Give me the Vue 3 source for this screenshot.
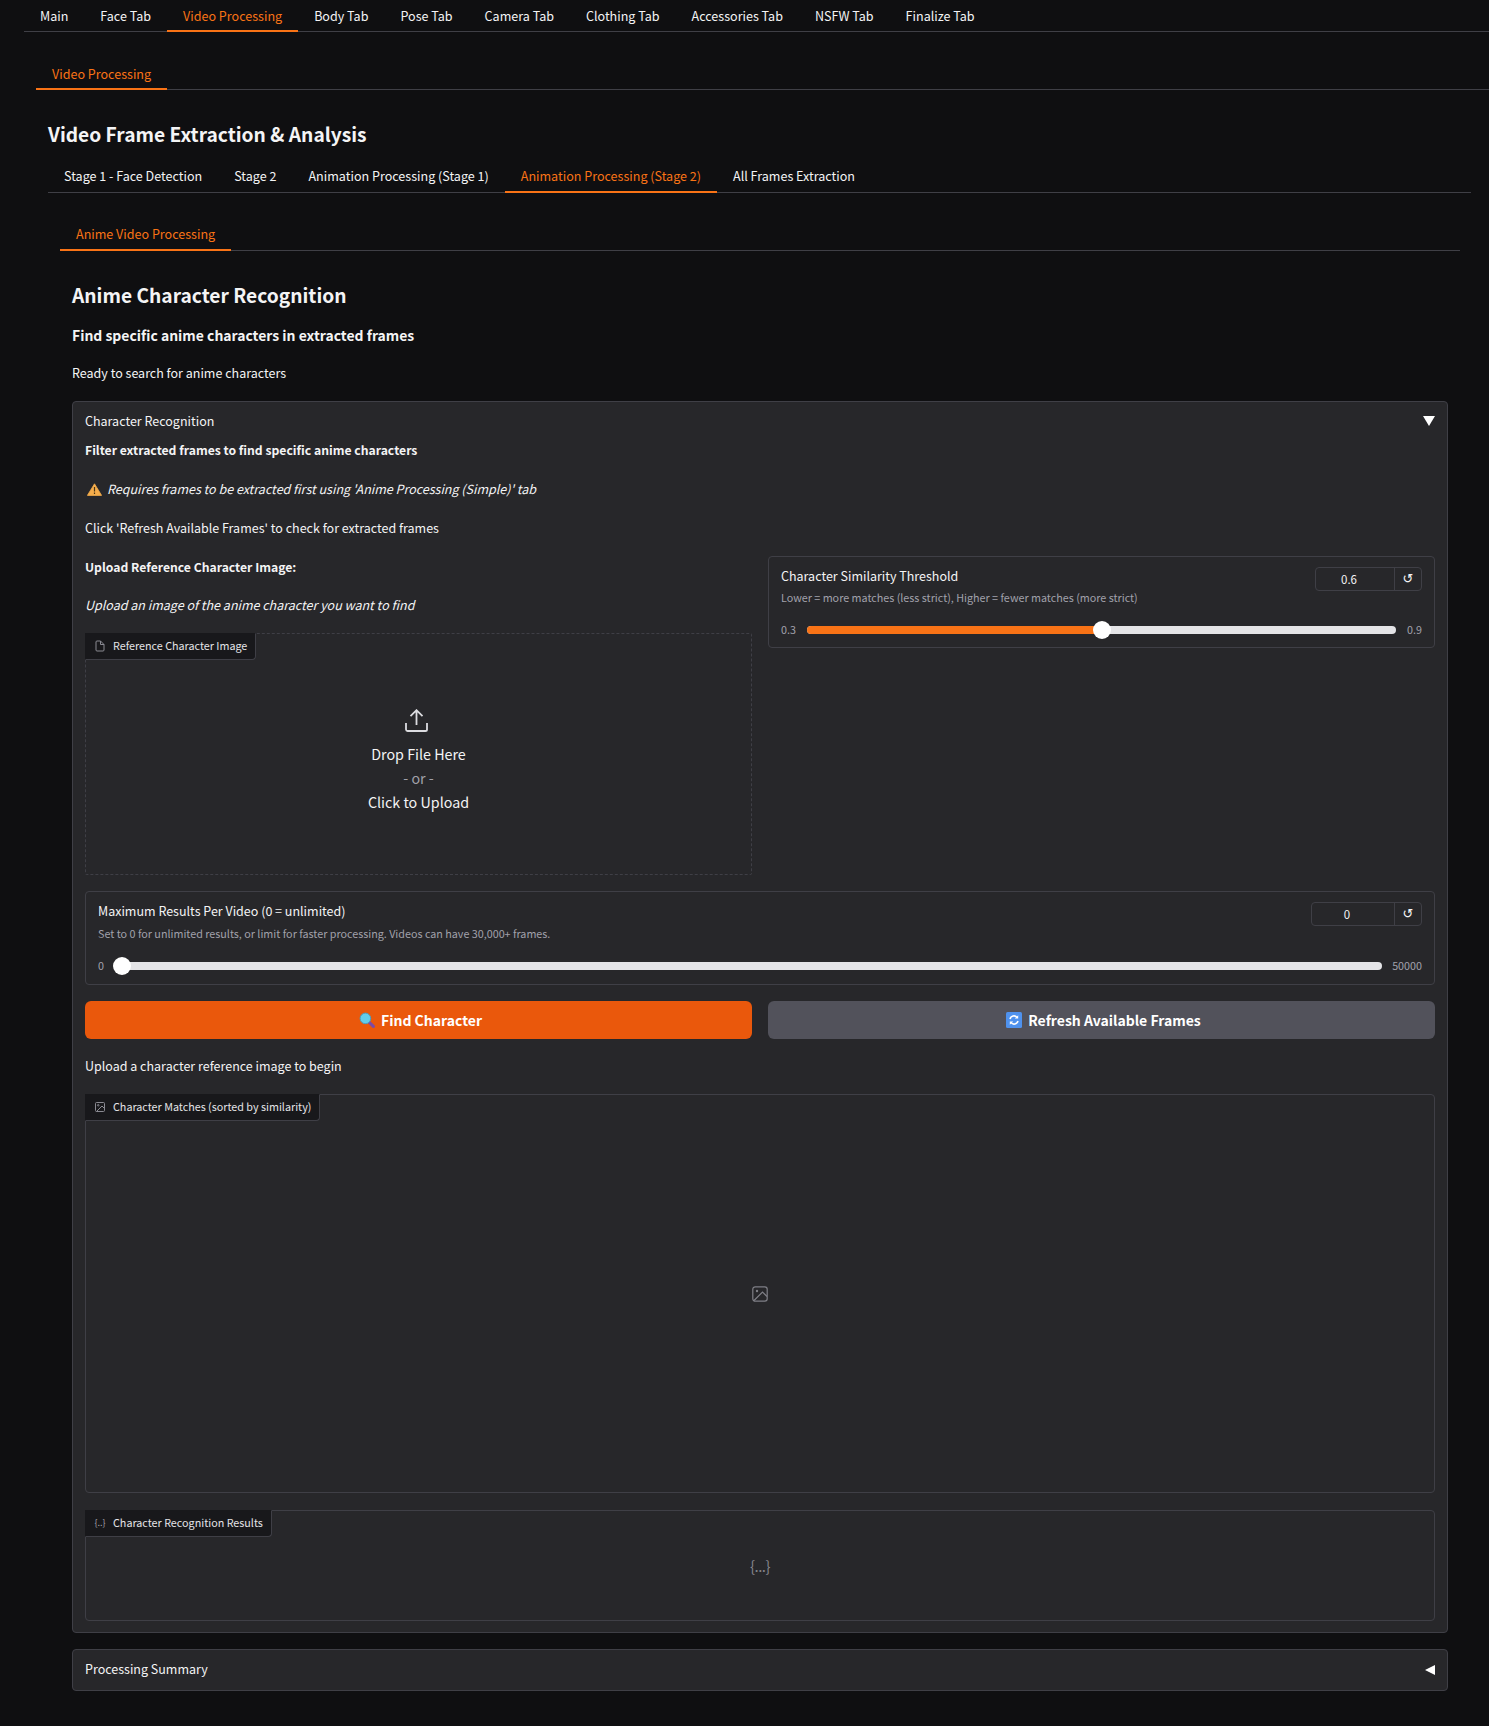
<script setup>
const mainTabs = ['Main','Face Tab','Video Processing','Body Tab','Pose Tab','Camera Tab','Clothing Tab','Accessories Tab','NSFW Tab','Finalize Tab']
const stageTabs = ['Stage 1 - Face Detection','Stage 2','Animation Processing (Stage 1)','Animation Processing (Stage 2)','All Frames Extraction']
</script>

<template>
  <div class="page">
    <nav class="tabs main-tabs">
      <span v-for="t in mainTabs" :key="t" class="tab" :class="{ active: t === 'Video Processing' }">{{ t }}</span>
    </nav>
    <nav class="tabs sub-tabs">
      <span class="tab active">Video Processing</span>
    </nav>
    <h1 class="title">Video Frame Extraction &amp; Analysis</h1>
    <nav class="tabs stage-tabs">
      <span v-for="t in stageTabs" :key="t" class="tab" :class="{ active: t === 'Animation Processing (Stage 2)' }">{{ t }}</span>
    </nav>
    <nav class="tabs anime-tabs">
      <span class="tab active">Anime Video Processing</span>
    </nav>

    <section class="content">
      <h2 class="heading">Anime Character Recognition</h2>
      <p class="sub">Find specific anime characters in extracted frames</p>
      <p class="ready">Ready to search for anime characters</p>

      <div class="panel">
        <div class="panel-head">
          <span>Character Recognition</span>
          <span class="tri-down"></span>
        </div>
        <p class="line bold">Filter extracted frames to find specific anime characters</p>
        <p class="line warn">
          <svg class="warn-icon" width="15" height="13" viewBox="0 0 15 13"><path d="M7.5.8 14.6 12.4H.4Z" fill="#f6ad4b" stroke="#f6ad4b" stroke-width=".8" stroke-linejoin="round"/><path d="M7.5 4v4.6M7.5 9.6v1.4" stroke="#4a3516" stroke-width="1.2"/></svg>
          <em>Requires frames to be extracted first using 'Anime Processing (Simple)' tab</em>
        </p>
        <p class="line click">Click 'Refresh Available Frames' to check for extracted frames</p>

        <div class="two-col">
          <div class="col-left">
            <p class="line bold">Upload Reference Character Image:</p>
            <p class="line up-sub"><em>Upload an image of the anime character you want to find</em></p>
            <div class="upload">
              <div class="chip">
                <svg width="12" height="12" viewBox="0 0 24 24" fill="none" stroke="#8a8a92" stroke-width="2"><path d="M13 2H6a2 2 0 0 0-2 2v16a2 2 0 0 0 2 2h12a2 2 0 0 0 2-2V9z"/><path d="M13 2v7h7"/></svg>
                <span>Reference Character Image</span>
              </div>
              <svg class="up-icon" width="23" height="23" viewBox="0 0 23 23" fill="none" stroke="#dcdce0" stroke-width="1.8"><path d="M11.5 16V1.2M5.5 7.2l6-6 6 6"/><path d="M1 14v6.5A1.6 1.6 0 0 0 2.6 22h17.8a1.6 1.6 0 0 0 1.6-1.6V14"/></svg>
              <div class="drop">Drop File Here</div>
              <div class="or">- or -</div>
              <div class="drop">Click to Upload</div>
            </div>
          </div>
          <div class="col-right">
            <div class="slider-box thresh">
              <div class="slider-top">
                <div>
                  <div class="s-label">Character Similarity Threshold</div>
                  <div class="s-info">Lower = more matches (less strict), Higher = fewer matches (more strict)</div>
                </div>
                <div class="num">
                  <span class="num-val">0.6</span>
                  <span class="num-reset">↺</span>
                </div>
              </div>
              <div class="slider-row">
                <span class="s-end">0.3</span>
                <div class="track">
                  <div class="fill" style="width: 50%"></div>
                  <div class="thumb" style="left: 50%"></div>
                </div>
                <span class="s-end">0.9</span>
              </div>
            </div>
          </div>
        </div>

        <div class="slider-box maxres">
          <div class="slider-top">
            <div>
              <div class="s-label">Maximum Results Per Video (0 = unlimited)</div>
              <div class="s-info">Set to 0 for unlimited results, or limit for faster processing. Videos can have 30,000+ frames.</div>
            </div>
            <div class="num">
              <span class="num-val">0</span>
              <span class="num-reset">↺</span>
            </div>
          </div>
          <div class="slider-row">
            <span class="s-end">0</span>
            <div class="track">
              <div class="thumb" style="left: 0%"></div>
            </div>
            <span class="s-end">50000</span>
          </div>
        </div>

        <div class="buttons">
          <button class="btn primary">
            <svg width="16" height="16" viewBox="0 0 16 16"><path d="M10.2 10.2 14.4 14.4" stroke="#7b4aa8" stroke-width="3" stroke-linecap="round"/><circle cx="6.4" cy="6.4" r="5.3" fill="#62cdec" stroke="#4a9cc0" stroke-width="1"/></svg>
            <span>Find Character</span>
          </button>
          <button class="btn secondary">
            <svg width="16" height="16" viewBox="0 0 16 16"><rect width="16" height="16" rx="1.5" fill="#4f92ee"/><path d="M4 7a4 4 0 0 1 7-1.6M12 9a4 4 0 0 1-7 1.6" fill="none" stroke="#fff" stroke-width="1.6"/><path d="M12.2 3.2v3.4H8.8zM3.8 12.8V9.4h3.4z" fill="#fff"/></svg>
            <span>Refresh Available Frames</span>
          </button>
        </div>

        <p class="line status">Upload a character reference image to begin</p>

        <div class="output gallery">
          <div class="chip">
            <svg width="12" height="12" viewBox="0 0 24 24" fill="none" stroke="#8a8a92" stroke-width="2"><rect x="3" y="3" width="18" height="18" rx="2"/><circle cx="8.5" cy="8.5" r="1.5"/><path d="m21 15-5-5L5 21"/></svg>
            <span>Character Matches (sorted by similarity)</span>
          </div>
          <svg class="center-icon" width="16" height="16" viewBox="0 0 16 16" fill="none" stroke="#7f7f86" stroke-width="1.2"><rect x=".8" y=".8" width="14.4" height="14.4" rx="2.4"/><circle cx="5" cy="5" r="1.2" fill="#7f7f86" stroke="none"/><path d="M2 14.5 10.5 6 15 10.5"/></svg>
        </div>

        <div class="output json">
          <div class="chip">
            <span class="brace">{..}</span>
            <span>Character Recognition Results</span>
          </div>
          <span class="center-brace">{...}</span>
        </div>
      </div>

      <div class="panel closed">
        <span>Processing Summary</span>
        <span class="tri-left"></span>
      </div>
    </section>
  </div>
</template>

<style>
html, body { margin: 0; background: #0f0f11; }
</style>

<style scoped>
.page {
  box-sizing: border-box;
  height: 1726px;
  background: #0f0f11;
  color: #f4f4f5;
  font-family: "Noto Sans CJK JP", "Noto Sans", sans-serif;
  font-size: 12.5px;
  overflow: hidden;
}
p, h1, h2 { margin: 0; }

.tabs { display: flex; border-bottom: 1px solid #3f3f46; height: 31px; box-sizing: content-box; }
.tab {
  padding: 0 16px;
  height: 32px;
  line-height: 32px;
  box-sizing: border-box;
  white-space: nowrap;
  color: #f4f4f5;
  font-size: 12.55px;
}
.tab.active { color: #f97316; border-bottom: 2px solid #f97316; }
.main-tabs { margin-left: 24px; }
.sub-tabs { margin: 26px 0 0 36px; }
.title { margin: 29px 0 0 48px; font-size: 19.2px; line-height: 30px; font-weight: 600; }
.stage-tabs { margin: 12px 18px 0 48px; }
.stage-tabs .tab, .anime-tabs .tab { line-height: 30px; }
.anime-tabs { margin: 26px 29px 0 60px; }

.content { padding: 0 41px 0 72px; }
.heading { margin-top: 29px; font-size: 19.2px; line-height: 30px; font-weight: 600; }
.sub { margin-top: 13px; font-size: 13.95px; line-height: 24px; font-weight: 600; }
.ready { margin-top: 15px; line-height: 22px; }

.panel {
  margin-top: 17px;
  border: 1px solid #3f3f46;
  border-radius: 4px;
  background: #27272a;
  padding: 0 12px;
  height: 1232px;
  box-sizing: border-box;
}
.panel-head { display: flex; justify-content: space-between; align-items: center; height: 37px; box-sizing: border-box; }
.tri-down { width: 0; height: 0; border-left: 6px solid transparent; border-right: 6px solid transparent; border-top: 10px solid #fff; }
.tri-left { width: 0; height: 0; margin-top: 3px; border-top: 5.5px solid transparent; border-bottom: 5.5px solid transparent; border-right: 10px solid #fff; }
.line { line-height: 22px; }
.bold { font-weight: 600; font-size: 12.2px; }
.warn { margin-top: 17px; display: flex; align-items: center; gap: 5px; }
.warn-icon { flex: none; margin-left: 2px; }
.click { margin-top: 17px; }

.two-col { display: flex; gap: 16px; margin-top: 17px; align-items: flex-start; }
.col-left, .col-right { flex: 1; min-width: 0; }
.up-sub { margin-top: 16px; }
.upload {
  position: relative;
  margin-top: 17px;
  height: 242px;
  border: 1px dashed #3f3f46;
  border-radius: 2px;
  box-sizing: border-box;
  display: flex;
  flex-direction: column;
  align-items: center;
  padding-top: 75px;
}
.up-icon { margin-left: -4px; margin-bottom: 10px; }
.drop { font-size: 14.3px; line-height: 24px; }
.or { font-size: 14.3px; line-height: 24px; color: #a1a1aa; }

.chip {
  position: absolute;
  left: -1px;
  top: -1px;
  display: flex;
  align-items: center;
  gap: 7px;
  height: 27px;
  padding: 0 8px 2px 8px;
  box-sizing: border-box;
  background: #18181b;
  border: 1px solid #3f3f46;
  border-top-color: transparent;
  border-left-color: transparent;
  border-radius: 0 0 4px 0;
  font-size: 10.75px;
  color: #e4e4e7;
  white-space: nowrap;
}
.brace { width: 12px; font-size: 9px; color: #a1a1aa; text-align: center; }

.slider-box {
  border: 1px solid #3f3f46;
  border-radius: 4px;
  padding: 9px 12px 0;
  box-sizing: border-box;
}
.thresh { height: 92px; }
.maxres { height: 94px; margin-top: 16px; }
.slider-top { display: flex; justify-content: space-between; align-items: flex-start; }
.s-label { line-height: 20px; }
.s-info { font-size: 10.75px; line-height: 18px; margin-top: 3px; color: #a1a1aa; }
.maxres .s-info { margin-top: 4px; }
.num {
  display: flex;
  height: 24px;
  width: 107px;
  margin-top: 1px;
  border: 1px solid #3f3f46;
  border-radius: 4px;
  box-sizing: border-box;
  font-size: 11.5px;
}
.maxres .num { width: 111px; }
.num-val { flex: 1; text-align: center; padding-right: 12px; line-height: 23px; }
.num-reset { width: 26px; border-left: 1px solid #3f3f46; text-align: center; line-height: 21px; font-family: "DejaVu Sans", sans-serif; font-size: 13px; }
.slider-row { display: flex; align-items: center; gap: 10px; margin-top: 14px; }
.thresh .slider-row { gap: 11px; }
.s-end { font-size: 10.75px; color: #a1a1aa; line-height: 18px; }
.track { position: relative; flex: 1; height: 8px; border-radius: 4px; background: #e4e4e7; }
.fill { height: 100%; border-radius: 4px 0 0 4px; background: #f97316; }
.thumb { position: absolute; top: -5px; width: 18px; height: 18px; margin-left: -9px; border-radius: 50%; background: #fff; }
.maxres .thumb { margin-left: -1px; }

.buttons { display: flex; gap: 16px; margin-top: 16px; }
.btn {
  flex: 1;
  height: 38px;
  border: 0;
  border-radius: 6px;
  padding: 0 0 0 4px;
  display: flex;
  align-items: center;
  justify-content: center;
  gap: 6px;
  font-family: inherit;
  font-size: 14px;
  font-weight: 600;
  color: #fff;
}
.primary { background: #ea580c; }
.secondary { background: #52525b; }
.status { margin-top: 16px; }

.output {
  position: relative;
  border: 1px solid #3f3f46;
  border-radius: 4px;
  box-sizing: border-box;
  display: flex;
  align-items: center;
  justify-content: center;
}
.gallery { height: 399px; margin-top: 17px; }
.json { height: 111px; margin-top: 17px; }
.center-brace { font-size: 15px; letter-spacing: -0.5px; color: #85858c; }

.panel.closed {
  margin-top: 16px;
  height: 42px;
  padding-bottom: 4px;
  display: flex;
  align-items: center;
  justify-content: space-between;
}
</style>
